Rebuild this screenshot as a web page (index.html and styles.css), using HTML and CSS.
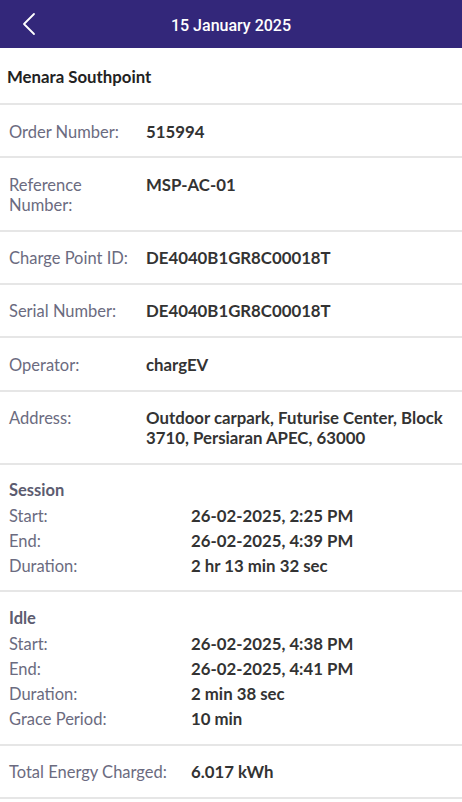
FILE: index.html
```html
<!DOCTYPE html>
<html lang="en">
<head>
<meta charset="utf-8">
<title>15 January 2025</title>
<link rel="stylesheet" href="styles.css">
</head>
<body>
<header class="topbar">
  <button class="back" aria-label="Back">
    <svg width="14" height="24" viewBox="0 0 14 24"><path d="M12 2 L2 12 L12 22" fill="none" stroke="#fff" stroke-width="1.8" stroke-linecap="round" stroke-linejoin="round"/></svg>
  </button>
  <h1 class="title">15 January 2025</h1>
</header>
<main>
  <div class="site">Menara Southpoint</div>
  <div class="row"><div class="label">Order Number:</div><div class="value">515994</div></div>
  <div class="row"><div class="label">Reference<br>Number:</div><div class="value">MSP-AC-01</div></div>
  <div class="row"><div class="label">Charge Point ID:</div><div class="value">DE4040B1GR8C00018T</div></div>
  <div class="row"><div class="label">Serial Number:</div><div class="value">DE4040B1GR8C00018T</div></div>
  <div class="row"><div class="label">Operator:</div><div class="value">chargEV</div></div>
  <div class="row"><div class="label">Address:</div><div class="value">Outdoor carpark, Futurise Center, Block 3710, Persiaran APEC, 63000</div></div>
  <section class="group">
    <div class="group-title">Session</div>
    <div class="line"><div class="label">Start:</div><div class="value">26-02-2025, 2:25 PM</div></div>
    <div class="line"><div class="label">End:</div><div class="value">26-02-2025, 4:39 PM</div></div>
    <div class="line"><div class="label">Duration:</div><div class="value">2 hr 13 min 32 sec</div></div>
  </section>
  <section class="group idle">
    <div class="group-title">Idle</div>
    <div class="line"><div class="label">Start:</div><div class="value">26-02-2025, 4:38 PM</div></div>
    <div class="line"><div class="label">End:</div><div class="value">26-02-2025, 4:41 PM</div></div>
    <div class="line"><div class="label">Duration:</div><div class="value">2 min 38 sec</div></div>
    <div class="line"><div class="label">Grace Period:</div><div class="value">10 min</div></div>
  </section>
  <div class="row wide"><div class="label">Total Energy Charged:</div><div class="value">6.017 kWh</div></div>
</main>
</body>
</html>
```
FILE: styles.css
```css
* { box-sizing: border-box; }
html, body { margin: 0; padding: 0; background: #fff; }
body { font-family: Lato, "Noto Sans", sans-serif; font-size: 16.5px; color: #333; }

.topbar {
  height: 48px;
  background: #33277a;
  display: flex;
  align-items: center;
  justify-content: center;
  position: relative;
}
.back {
  position: absolute;
  left: 22px;
  top: 12px;
  background: none;
  border: 0;
  padding: 0;
  width: 14px;
  height: 24px;
  display: flex;
}
.title {
  margin: 0;
  font-family: Roboto, "DejaVu Sans", sans-serif;
  font-weight: 500;
  font-size: 16px;
  color: #fff;
  padding-top: 2px;
}

.site {
  height: 57px;
  padding: 2px 7px 0;
  display: flex;
  align-items: center;
  font-weight: 700;
  font-size: 16.8px;
  color: #222;
  border-bottom: 2px solid #e6e6e6;
}
.row {
  display: flex;
  padding: 16.5px 0 14.83px 9px;
  line-height: 20px;
  border-bottom: 2px solid #e6e6e6;
}
.label {
  color: #6b6b80;
  flex: 0 0 137px;
}
.value {
  font-weight: 700;
  font-size: 16.8px;
  color: #333;
  flex: 1;
  padding-right: 12px;
}
.group {
  padding: 13px 0 12px 9px;
  border-bottom: 2px solid #e6e6e6;
  line-height: 25px;
}
.group.idle { padding: 14px 0 13px 9px; }
.group-title {
  font-weight: 700;
  color: #5c5c70;
  height: 25px;
}
.line { display: flex; height: 25px; }
.line .label { padding-top: 1px; }
.group .label, .row.wide .label { flex: 0 0 182px; }
```
